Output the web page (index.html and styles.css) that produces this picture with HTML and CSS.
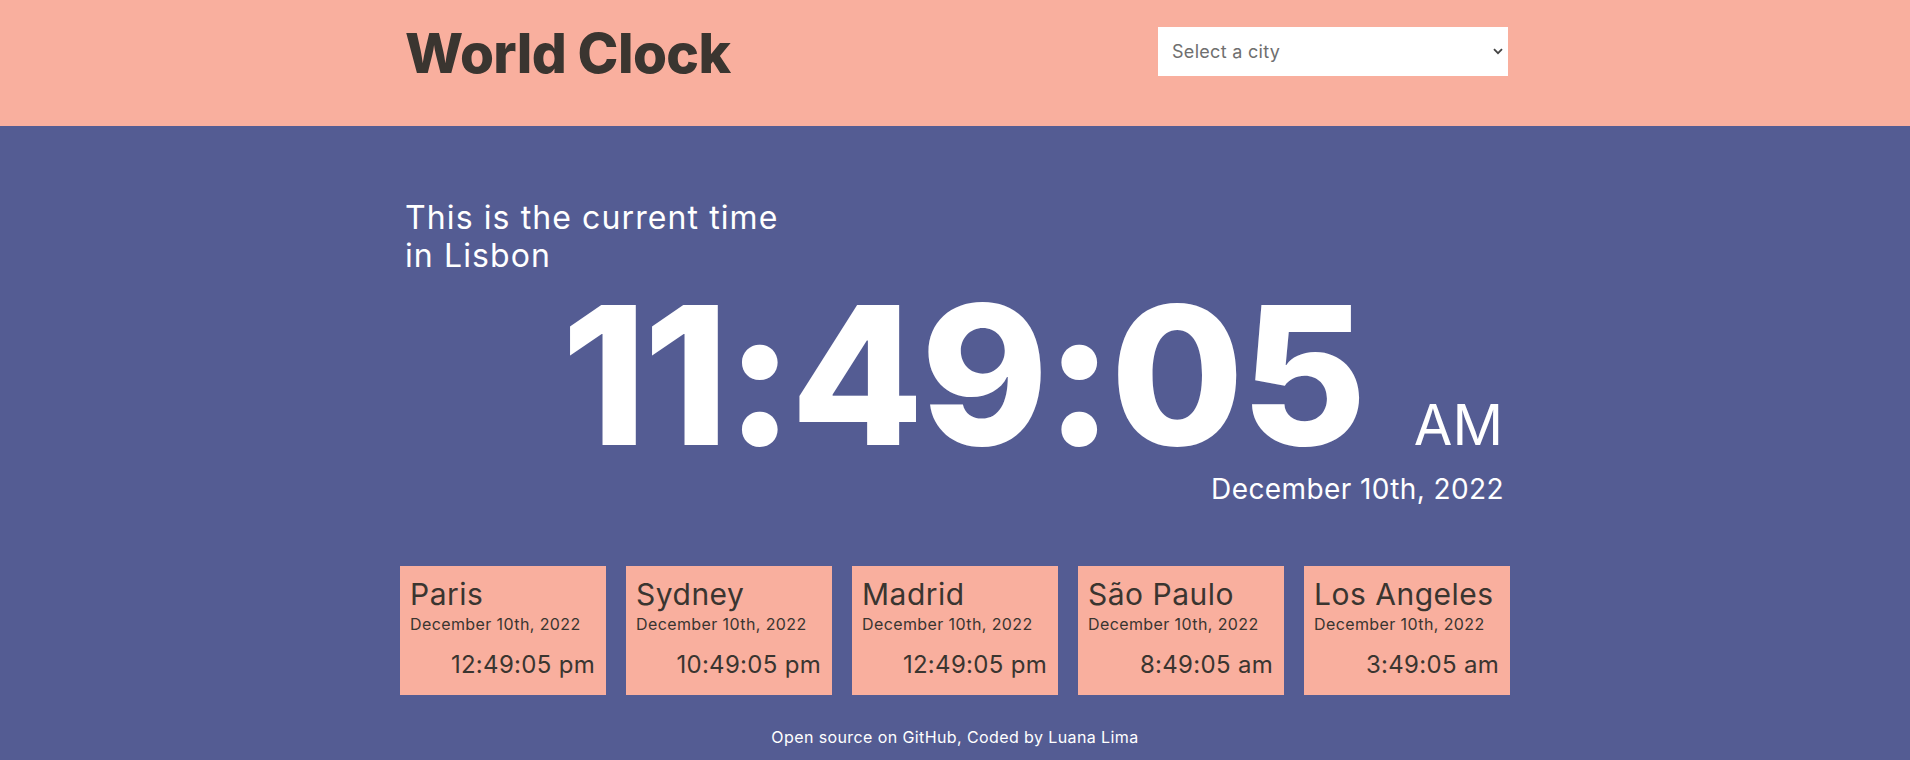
FILE: index.html
```html
<!DOCTYPE html>
<html lang="en">
<head>
<meta charset="utf-8">
<title>World Clock</title>
<link rel="stylesheet" href="styles.css">
</head>
<body>
<header class="top">
  <div class="container top-inner">
    <h1 class="brand">World Clock</h1>
    <div class="select-wrap">
      <select class="city-select">
        <option>Select a city</option>
        <option>Lisbon</option>
        <option>Paris</option>
        <option>Sydney</option>
      </select>
      <svg class="chevron" width="10" height="7" viewBox="0 0 10 7"><path d="M1 1.2 L5 5.2 L9 1.2" fill="none" stroke="#444" stroke-width="1.8"/></svg>
    </div>
  </div>
</header>
<main class="hero">
  <div class="container">
    <p class="intro">This is the current time in Lisbon</p>
    <div class="clock">
      <span class="clock-time">11:49:05</span>
      <span class="clock-ampm">AM</span>
    </div>
    <div class="clock-date">December 10th, 2022</div>
    <div class="cards">
      <div class="card"><div class="card-city">Paris</div><div class="card-date">December 10th, 2022</div><div class="card-time">12:49:05 pm</div></div>
      <div class="card"><div class="card-city">Sydney</div><div class="card-date">December 10th, 2022</div><div class="card-time">10:49:05 pm</div></div>
      <div class="card"><div class="card-city">Madrid</div><div class="card-date">December 10th, 2022</div><div class="card-time">12:49:05 pm</div></div>
      <div class="card"><div class="card-city">São Paulo</div><div class="card-date">December 10th, 2022</div><div class="card-time">8:49:05 am</div></div>
      <div class="card"><div class="card-city">Los Angeles</div><div class="card-date">December 10th, 2022</div><div class="card-time">3:49:05 am</div></div>
    </div>
    <footer class="foot">Open source on <a href="#">GitHub</a>, Coded by <a href="#">Luana Lima</a></footer>
  </div>
</main>
</body>
</html>
```
FILE: styles.css
```css
* { box-sizing: border-box; }
html, body { margin: 0; padding: 0; }
body {
  font-family: Inter, "Noto Sans", "DejaVu Sans", sans-serif;
  background: #545c93;
  color: #fff;
  height: 760px;
  overflow: hidden;
}
.container {
  width: 1100px;
  margin: 0 auto;
}
.top {
  background: #f9af9e;
  height: 126px;
}
.top-inner {
  display: flex;
  justify-content: space-between;
  align-items: flex-start;
  height: 100%;
}
.brand {
  margin: 0;
  padding-top: 20px;
  font-size: 55px;
  line-height: 66px;
  font-weight: 800;
  color: #3a3530;
  letter-spacing: -0.6px;
}
.select-wrap {
  position: relative;
  margin-top: 27px;
  margin-right: -3px;
  width: 350px;
  height: 49px;
}
.city-select {
  appearance: none;
  -webkit-appearance: none;
  width: 100%;
  height: 100%;
  border: none;
  border-radius: 0;
  background: #fff;
  padding: 0 14px;
  font-family: Inter, "Noto Sans", sans-serif;
  font-size: 18px;
  letter-spacing: 0.3px;
  color: #6f6f6f;
  outline: none;
}
.chevron {
  position: absolute;
  right: 5px;
  top: 21px;
  pointer-events: none;
}
.hero {
  padding-top: 73px;
}
.intro {
  margin: 0;
  max-width: 385px;
  font-size: 32px;
  line-height: 38px;
  font-weight: 400;
  letter-spacing: 1.1px;
}
.clock {
  display: flex;
  justify-content: flex-end;
  align-items: baseline;
  margin-top: 5px;
  padding-right: 2px;
}
.clock-time {
  font-size: 193px;
  line-height: 190px;
  font-weight: 800;
  letter-spacing: -3px;
}
.clock-ampm {
  margin-left: 50px;
  font-size: 56px;
  font-weight: 400;
}
.clock-date {
  margin-top: 2px;
  text-align: right;
  font-size: 28px;
  line-height: 34px;
  letter-spacing: 0.4px;
  padding-right: 1px;
}
.cards {
  display: grid;
  grid-template-columns: repeat(5, 1fr);
  gap: 20px;
  margin: 60px -5px 0;
}
.card {
  background: #f9af9e;
  color: #3a3530;
  height: 129px;
  padding: 10px 11px 0 10px;
}
.card-city {
  font-size: 30px;
  line-height: 36px;
  letter-spacing: 0.5px;
}
.card-date {
  font-size: 16px;
  line-height: 20px;
  margin-top: 2px;
  letter-spacing: 0.4px;
}
.card-time {
  margin-top: 16px;
  text-align: right;
  font-size: 24px;
  line-height: 30px;
  letter-spacing: 0.3px;
}
.foot {
  margin-top: 32px;
  text-align: center;
  font-size: 16px;
  line-height: 20px;
  letter-spacing: 0.4px;
}
.foot a {
  color: #fff;
  text-decoration: none;
}
```
